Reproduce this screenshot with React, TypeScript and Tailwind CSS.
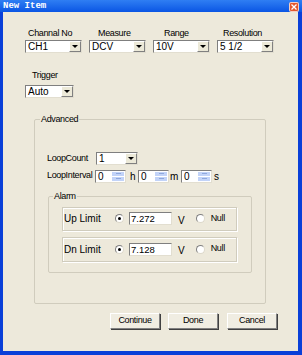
import React from "react"

const font = "font-['Liberation_Sans',Arial,sans-serif]"
const small = "text-[9px] tracking-[-0.35px]"

const Combo: React.FC<{ value: string; w: string }> = ({ value, w }) => {
  return (
    <div className={`${w} h-[13px] flex items-stretch bg-white border border-t-[#7f7f7f] border-l-[#7f7f7f] border-r-[#e2ded0] border-b-[#e2ded0]`}>
      <div className="flex-1 pl-[2px] text-[10px] leading-[11px] text-black truncate">{value}</div>
      {/* drop button */}
      <div className="w-[12px] flex items-center justify-center bg-[#ece9d8] border border-t-white border-l-white border-r-[#808080] border-b-[#808080]">
        <div className="w-0 h-0 border-l-[3px] border-r-[3px] border-t-[3px] border-l-transparent border-r-transparent border-t-black" />
      </div>
    </div>
  )
}

const Spinner: React.FC<{ value: string }> = ({ value }) => {
  return (
    <div className="w-[31px] h-[13px] flex items-stretch bg-white border border-t-[#7f7f7f] border-l-[#7f7f7f] border-r-[#e2ded0] border-b-[#e2ded0]">
      <div className="flex-1 pl-[2px] text-[10px] leading-[11px] text-black">{value}</div>
      <div className="w-[12px] flex flex-col gap-[1px] py-[1px] mr-[1px]">
        <div className="flex-1 bg-[#c2d3f8] flex items-center justify-center">
          <div className="w-[5px] h-[1px] bg-[#8fa8dc]" />
        </div>
        <div className="flex-1 bg-[#c2d3f8] flex items-center justify-center">
          <div className="w-[5px] h-[1px] bg-[#8fa8dc]" />
        </div>
      </div>
    </div>
  )
}

const Radio: React.FC<{ checked?: boolean }> = ({ checked }) => {
  return (
    <div className="w-[9px] h-[9px] rounded-full bg-white border border-t-[#808080] border-l-[#808080] border-r-[#dcd8ca] border-b-[#dcd8ca] flex items-center justify-center">
      {checked && <div className="w-[3px] h-[3px] rounded-full bg-black" />}
    </div>
  )
}

const LimitRow: React.FC<{ label: string; value: string; h: string }> = ({ label, value, h }) => {
  return (
    <div className={`w-[175px] ${h} flex items-center border border-[#d0ccbd] shadow-[inset_1px_1px_0_#fff,1px_1px_0_#fff]`}>
      <div className="w-[52px] pl-[1px] text-[10px] text-black">{label}</div>
      <Radio checked />
      <div className="ml-[5px] w-[43px] h-[13px] bg-white border border-t-[#7f7f7f] border-l-[#7f7f7f] border-r-[#e2ded0] border-b-[#e2ded0] pl-[1px] text-[9.5px] leading-[11px] text-black">
        {value}
      </div>
      <div className="ml-[6px] pt-[3px] text-[10px] text-black">V</div>
      <div className="ml-[11px]">
        <Radio />
      </div>
      <div className={`ml-[6px] ${small} text-black`}>Null</div>
    </div>
  )
}

const Button: React.FC<{ label: string }> = ({ label }) => {
  return (
    <div className={`w-[50px] h-[16px] flex items-center justify-center bg-[#f0ede2] border border-t-white border-l-white border-r-[#808080] border-b-[#808080] shadow-[1px_1px_0_#404040] ${small} text-black`}>
      {label}
    </div>
  )
}

const App: React.FC = () => {
  return (
    <div className={`w-[302px] h-[355px] flex flex-col bg-[#0a3fd8] ${font}`}>
      {/* Title bar */}
      <div className="h-[12px] flex items-center justify-between bg-gradient-to-b from-[#2f7ef3] to-[#0a55e4] pl-[3px] pr-[3px]">
        <span className="font-['Liberation_Mono',monospace] font-bold text-[9px] leading-[10px] text-white">New Item</span>
        <div className="w-[10px] h-[10px] mt-[1px] rounded-[2px] bg-[#e2572d] border border-white/70 flex items-center justify-center">
          <svg width="6" height="6" viewBox="0 0 6 6">
            <path d="M0.5 0.5 L5.5 5.5 M5.5 0.5 L0.5 5.5" stroke="white" strokeWidth="1.3" />
          </svg>
        </div>
      </div>
      {/* End Title bar */}

      {/* Body */}
      <div className="flex-1 ml-[3px] mr-[4px] mb-[4px] bg-[#ede9db] flex flex-col">
        {/* Top row */}
        <div className="flex pt-[15px] pl-[22px] gap-[7px]">
          <div className="flex flex-col">
            <div className={`pl-[3px] ${small} leading-[12px] text-black`}>Channal No</div>
            <div className="mt-[1px]"><Combo value="CH1" w="w-[57px]" /></div>
          </div>
          <div className="flex flex-col">
            <div className={`pl-[9px] ${small} leading-[12px] text-black`}>Measure</div>
            <div className="mt-[1px]"><Combo value="DCV" w="w-[57px]" /></div>
          </div>
          <div className="flex flex-col">
            <div className={`pl-[11px] ${small} leading-[12px] text-black`}>Range</div>
            <div className="mt-[1px]"><Combo value="10V" w="w-[57px]" /></div>
          </div>
          <div className="flex flex-col">
            <div className={`pl-[6px] ${small} leading-[12px] text-black`}>Resolution</div>
            <div className="mt-[1px]"><Combo value="5 1/2" w="w-[57px]" /></div>
          </div>
        </div>

        {/* Trigger */}
        <div className="flex flex-col pl-[22px] mt-[16px]">
          <div className={`pl-[7px] ${small} leading-[12px] text-black`}>Trigger</div>
          <div className="mt-[4px]"><Combo value="Auto" w="w-[49px]" /></div>
        </div>

        {/* Advanced */}
        <div className="relative ml-[31px] mt-[21px] w-[232px] h-[185px] border border-[#d0ccbd] rounded-[2px] pt-[32px] pl-[12px]">
          <span className={`absolute -top-[7px] left-[5px] px-[1px] bg-[#ede9db] ${small} leading-[12px] text-black`}>Advanced</span>

          <div className="flex items-center">
            <div className={`w-[49px] ${small} text-black`}>LoopCount</div>
            <Combo value="1" w="w-[42px]" />
          </div>

          <div className="flex items-center mt-[3px]">
            <div className={`w-[48px] ${small} text-black whitespace-nowrap`}>LoopInterval</div>
            <Spinner value="0" />
            <div className="w-[12px] pl-[4px] text-[10px] text-black">h</div>
            <Spinner value="0" />
            <div className="w-[12px] pl-[1px] text-[10px] text-black">m</div>
            <Spinner value="0" />
            <div className="pl-[2px] text-[10px] text-black">s</div>
          </div>

          {/* Alarm */}
          <div className="relative ml-[1px] mt-[12px] w-[204px] h-[77px] border border-[#d0ccbd] rounded-[2px] pt-[10px] pl-[13px] flex flex-col gap-[6px]">
            <span className={`absolute -top-[7px] left-[4px] px-[1px] bg-[#ede9db] ${small} leading-[12px] text-black`}>Alarm</span>
            <LimitRow label="Up Limit" value="7.272" h="h-[24px]" />
            <LimitRow label="Dn Limit" value="7.128" h="h-[25px]" />
          </div>
        </div>

        {/* Buttons */}
        <div className="flex justify-end pr-[21px] mt-[9px]">
          <Button label="Continue" />
          <div className="ml-[8px]"><Button label="Done" /></div>
          <div className="ml-[9px]"><Button label="Cancel" /></div>
        </div>
      </div>
    </div>
  )
}

export default App
